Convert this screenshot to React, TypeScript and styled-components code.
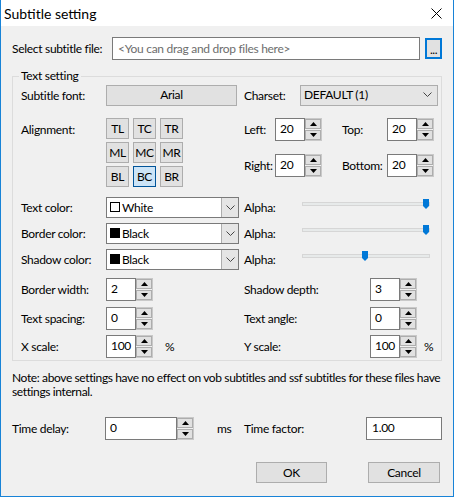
import React from 'react';
import styled, { createGlobalStyle } from 'styled-components';

const Global = createGlobalStyle`
  html, body { margin: 0; padding: 0; background: #f0f0f0; }
  body { font-family: Lato, "Liberation Sans", sans-serif; font-size: 12px; letter-spacing: -0.3px; color: #000; }
  * { box-sizing: border-box; }
`;

const Window = styled.div`
  width: 454px;
  height: 497px;
  border: 1px solid #1883d7;
  border-top: none;
  background: #f0f0f0;
  display: flex;
  flex-direction: column;
`;

const TitleBar = styled.div`
  height: 26px;
  background: #fff;
  display: flex;
  align-items: center;
  justify-content: space-between;
  padding: 0 11px 0 3px;
  flex-shrink: 0;
`;

const Title = styled.span`
  font-size: 14px;
  letter-spacing: 0;
`;

const Content = styled.div`
  padding: 11px 11px 0 11px;
  display: flex;
  flex-direction: column;
`;

const Row = styled.div<{ $mt?: number; $h?: number; $align?: string }>`
  display: flex;
  align-items: ${(p) => p.$align || 'center'};
  margin-top: ${(p) => p.$mt || 0}px;
  ${(p) => (p.$h ? `height: ${p.$h}px;` : '')}
`;

const Label = styled.span<{ $w: number; $pt?: number; $ml?: number }>`
  width: ${(p) => p.$w}px;
  flex-shrink: 0;
  white-space: nowrap;
  margin-left: ${(p) => p.$ml || 0}px;
  padding-top: ${(p) => p.$pt || 0}px;
`;

const FileInput = styled.div`
  width: 308px;
  height: 23px;
  background: #fff;
  border: 1px solid #7a7a7a;
  color: #6d6d6d;
  display: flex;
  align-items: center;
  padding-left: 5px;
  padding-bottom: 1px;
`;

const BrowseButton = styled.div`
  width: 17px;
  height: 21px;
  margin-left: 5px;
  border: 2px solid #0078d7;
  background: #e1e1e1;
  display: flex;
  align-items: flex-end;
  justify-content: center;
  padding-bottom: 2px;
  line-height: 10px;
  letter-spacing: -0.5px;
`;

const Group = styled.fieldset`
  margin: 9px 0 0 0;
  width: 430px;
  border: 1px solid #dcdcdc;
  padding: 1px 3px 2px 8px;
  min-width: 0;
`;

const Legend = styled.legend`
  padding: 0 2px;
  margin-left: -2px;
  line-height: 14px;
`;

const LeftCell = styled.div`
  width: 223px;
  flex-shrink: 0;
  display: flex;
  align-items: center;
`;

const LeftTopCell = styled(LeftCell)`
  align-items: flex-start;
`;

const RightCell = styled.div`
  display: flex;
  align-items: center;
`;

const RightColumn = styled.div`
  display: flex;
  flex-direction: column;
  gap: 13px;
`;

const PushButton = styled.div<{ $w: number; $h?: number }>`
  width: ${(p) => p.$w}px;
  height: ${(p) => p.$h || 21}px;
  background: #e1e1e1;
  border: 1px solid #adadad;
  display: flex;
  align-items: center;
  justify-content: center;
  padding-bottom: 1px;
`;

const Select = styled.div`
  width: 138px;
  height: 21px;
  background: #e5e5e5;
  border: 1px solid #adadad;
  display: flex;
  align-items: center;
  justify-content: space-between;
  padding: 0 5px 1px 3px;
`;

const AlignGrid = styled.div`
  display: grid;
  grid-template-columns: repeat(3, 23px);
  grid-auto-rows: 21px;
  column-gap: 4px;
  row-gap: 3px;
`;

const AlignButton = styled.div<{ $active?: boolean }>`
  background: ${(p) => (p.$active ? '#cce4f7' : '#e1e1e1')};
  border: 1px solid ${(p) => (p.$active ? '#005499' : '#adadad')};
  display: flex;
  align-items: center;
  justify-content: center;
  padding-bottom: 1px;
`;

const SpinWrap = styled.div`
  display: flex;
  flex-shrink: 0;
`;

const SpinInput = styled.div<{ $w: number; $h: number }>`
  width: ${(p) => p.$w}px;
  height: ${(p) => p.$h}px;
  background: #fff;
  border: 1px solid #7a7a7a;
  display: flex;
  align-items: center;
  padding: 0 0 3px 4px;
`;

const SpinButtons = styled.div<{ $h: number }>`
  width: 17px;
  height: ${(p) => p.$h}px;
  border: 1px solid #c9c9c9;
  border-left: none;
  display: flex;
  flex-direction: column;
  justify-content: space-between;
  padding: 0;
`;

const SpinButton = styled.div`
  flex: 0 0 10px;
  background: #e1e1e1;
  border: 1px solid #adadad;
  display: flex;
  align-items: center;
  justify-content: center;
`;

const Combo = styled.div`
  width: 133px;
  height: 21px;
  background: #fff;
  border: 1px solid #7a7a7a;
  display: flex;
  align-items: stretch;
`;

const ComboValue = styled.div`
  flex: 1;
  display: flex;
  align-items: center;
  padding-left: 3px;
  padding-bottom: 1px;
`;

const Swatch = styled.span<{ $c: string }>`
  width: 10px;
  height: 10px;
  border: 1px solid #000;
  background: ${(p) => p.$c};
  margin-right: 2px;
`;

const ComboButton = styled.div`
  width: 17px;
  background: #e5e5e5;
  border-left: 1px solid #adadad;
  display: flex;
  align-items: center;
  justify-content: center;
`;

const Slider = styled.div`
  position: relative;
  width: 128px;
  height: 21px;
`;

const Track = styled.div`
  position: absolute;
  left: 0;
  right: 0;
  top: 5px;
  height: 4px;
  background: #e7eaea;
  border: 1px solid #d6d6d6;
`;

const Thumb = styled.div`
  position: absolute;
  top: 2px;
  width: 6px;
  height: 10px;
  background: #0078d7;
  clip-path: polygon(0 0, 100% 0, 100% 70%, 50% 100%, 0 70%);
`;

const Unit = styled.span<{ $ml: number }>`
  margin-left: ${(p) => p.$ml}px;
`;

const Note = styled.div`
  margin-top: 10px;
  display: flex;
  flex-direction: column;
  letter-spacing: -0.38px;
`;

const NoteLine = styled.div`
  height: 14px;
  line-height: 14px;
  white-space: nowrap;
`;

const TextBox = styled.div`
  width: 77px;
  height: 23px;
  background: #fff;
  border: 1px solid #7a7a7a;
  display: flex;
  align-items: center;
  padding: 0 0 3px 5px;
`;

const ButtonRow = styled.div`
  margin-top: 22px;
  display: flex;
  justify-content: flex-end;
  gap: 41px;
  padding-right: 2px;
`;

const Chevron = () => (
  <svg width="9" height="5" viewBox="0 0 9 5">
    <path d="M0.5 0.5 L4.5 4.5 L8.5 0.5" fill="none" stroke="#444" strokeWidth="1" />
  </svg>
);

const Arrow = ({ up }: { up?: boolean }) => (
  <svg width="7" height="4" viewBox="0 0 7 4">
    <path d={up ? 'M0 4 L7 4 L3.5 0 Z' : 'M0 0 L7 0 L3.5 4 Z'} fill="#000" />
  </svg>
);

const Spin = ({ value, w = 30, h = 23 }: { value: string; w?: number; h?: number }) => (
  <SpinWrap>
    <SpinInput $w={w} $h={h}>{value}</SpinInput>
    <SpinButtons $h={h}>
      <SpinButton><Arrow up /></SpinButton>
      <SpinButton><Arrow /></SpinButton>
    </SpinButtons>
  </SpinWrap>
);

const ColorCombo = ({ color, name }: { color: string; name: string }) => (
  <Combo>
    <ComboValue>
      <Swatch $c={color} />
      {name}
    </ComboValue>
    <ComboButton><Chevron /></ComboButton>
  </Combo>
);

const AlphaSlider = ({ pos }: { pos: number }) => (
  <Slider>
    <Track />
    <Thumb style={{ left: `${pos}px` }} />
  </Slider>
);

const aligns = ['TL', 'TC', 'TR', 'ML', 'MC', 'MR', 'BL', 'BC', 'BR'];

export default function App() {
  return (
    <>
      <Global />
      <Window>
        <TitleBar>
          <Title>Subtitle setting</Title>
          <svg width="11" height="11" viewBox="0 0 11 11">
            <path d="M0.5 0.5 L10.5 10.5 M10.5 0.5 L0.5 10.5" stroke="#000" strokeWidth="1" />
          </svg>
        </TitleBar>
        <Content>
          <Row $h={23}>
            <Label $w={100}>Select subtitle file:</Label>
            <FileInput>&lt;You can drag and drop files here&gt;</FileInput>
            <BrowseButton>...</BrowseButton>
          </Row>
          <Group>
            <Legend>Text setting</Legend>
            <Row $h={22}>
              <LeftCell>
                <Label $w={85}>Subtitle font:</Label>
                <PushButton $w={131}>Arial</PushButton>
              </LeftCell>
              <RightCell>
                <Label $w={56}>Charset:</Label>
                <Select>
                  <span>DEFAULT (1)</span>
                  <Chevron />
                </Select>
              </RightCell>
            </Row>
            <Row $mt={12} $align="flex-start">
              <LeftTopCell>
                <Label $w={85} $pt={4}>Alignment:</Label>
                <AlignGrid>
                  {aligns.map((a) => (
                    <AlignButton key={a} $active={a === 'BC'}>{a}</AlignButton>
                  ))}
                </AlignGrid>
              </LeftTopCell>
              <RightColumn>
                <Row>
                  <Label $w={31}>Left:</Label>
                  <Spin value="20" />
                  <Label $w={45} $ml={20}>Top:</Label>
                  <Spin value="20" />
                </Row>
                <Row>
                  <Label $w={31}>Right:</Label>
                  <Spin value="20" />
                  <Label $w={45} $ml={20}>Bottom:</Label>
                  <Spin value="20" />
                </Row>
              </RightColumn>
            </Row>
            <Row $mt={10}>
              <LeftCell>
                <Label $w={85}>Text color:</Label>
                <ColorCombo color="#fff" name="White" />
              </LeftCell>
              <RightCell>
                <Label $w={58}>Alpha:</Label>
                <AlphaSlider pos={121} />
              </RightCell>
            </Row>
            <Row $mt={5}>
              <LeftCell>
                <Label $w={85}>Border color:</Label>
                <ColorCombo color="#000" name="Black" />
              </LeftCell>
              <RightCell>
                <Label $w={58}>Alpha:</Label>
                <AlphaSlider pos={121} />
              </RightCell>
            </Row>
            <Row $mt={5}>
              <LeftCell>
                <Label $w={85}>Shadow color:</Label>
                <ColorCombo color="#000" name="Black" />
              </LeftCell>
              <RightCell>
                <Label $w={58}>Alpha:</Label>
                <AlphaSlider pos={60} />
              </RightCell>
            </Row>
            <Row $mt={8}>
              <LeftCell>
                <Label $w={85}>Border width:</Label>
                <Spin value="2" />
              </LeftCell>
              <RightCell>
                <Label $w={126}>Shadow depth:</Label>
                <Spin value="3" />
              </RightCell>
            </Row>
            <Row $mt={6}>
              <LeftCell>
                <Label $w={85}>Text spacing:</Label>
                <Spin value="0" />
              </LeftCell>
              <RightCell>
                <Label $w={126}>Text angle:</Label>
                <Spin value="0" />
              </RightCell>
            </Row>
            <Row $mt={5}>
              <LeftCell>
                <Label $w={85}>X scale:</Label>
                <Spin value="100" />
                <Unit $ml={12}>%</Unit>
              </LeftCell>
              <RightCell>
                <Label $w={126}>Y scale:</Label>
                <Spin value="100" />
                <Unit $ml={7}>%</Unit>
              </RightCell>
            </Row>
          </Group>
          <Note>
            <NoteLine>Note: above settings have no effect on vob subtitles and ssf subtitles for these files have</NoteLine>
            <NoteLine>settings internal.</NoteLine>
          </Note>
          <Row $mt={18} $h={23}>
            <Label $w={93}>Time delay:</Label>
            <Spin value="0" w={72} h={23} />
            <Label $w={27} $ml={23}>ms</Label>
            <Label $w={122}>Time factor:</Label>
            <TextBox>1.00</TextBox>
          </Row>
          <ButtonRow>
            <PushButton $w={71}>OK</PushButton>
            <PushButton $w={72}>Cancel</PushButton>
          </ButtonRow>
        </Content>
      </Window>
    </>
  );
}
